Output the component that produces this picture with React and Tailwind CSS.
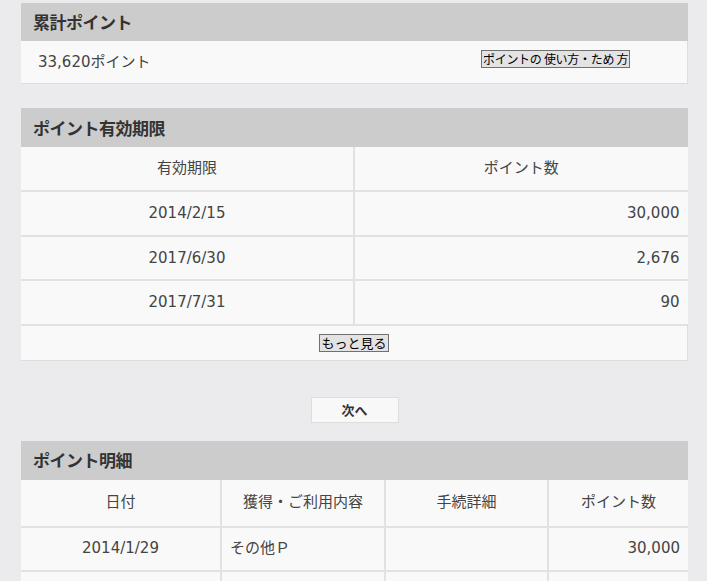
import React from "react";

const font = { fontFamily: '"DejaVu Sans", "Noto Sans CJK JP", sans-serif' };
const jp = { fontFamily: '"Noto Sans CJK JP", sans-serif' };

function Header({ children, h = "h-[39px]" }) {
  return (
    <div
      className={`${h} bg-[#cccccc] pl-[12px] flex items-center text-[17px] font-bold text-[#333333] tracking-[-0.5px]`}
      style={jp}
    >
      {children}
    </div>
  );
}

const cell = "border-[2px] border-[#e2e2e2] text-[15px] text-[#444444] font-normal";

export default function App() {
  return (
    <div className="min-h-[581px] w-[707px] bg-[#ebebed] pt-[3px] pl-[21px]" style={font}>
      {/* 累計ポイント */}
      <div className="w-[667px]">
        <Header h="h-[38px]">累計ポイント</Header>
        <div className="h-[43px] bg-[#f9f9f9] border-r border-b border-[#dddddd] flex items-center relative">
          <span className="pl-[17px] text-[15px] text-[#444444]">33,620ポイント</span>
          <button
            className="absolute left-[460px] top-[9px] h-[18px] px-[1px] border border-[#707070] bg-[#e3e3e3] text-[12px] leading-[16px] text-black tracking-[-0.3px]"
            style={jp}
          >
            ポイントの 使い方・ため 方
          </button>
        </div>
      </div>

      {/* ポイント有効期限 */}
      <div className="w-[667px] mt-[24px]">
        <Header>ポイント有効期限</Header>
        <table className="w-full border-collapse bg-[#f9f9f9] table-fixed">
          <colgroup>
            <col className="w-[333px]" />
            <col />
          </colgroup>
          <thead>
            <tr className="h-[44px]">
              <th className={`${cell} border-t-0 border-l-0 text-center`}>有効期限</th>
              <th className={`${cell} border-t-0 border-r-0 text-center`}>ポイント数</th>
            </tr>
          </thead>
          <tbody>
            <tr className="h-[45px]">
              <td className={`${cell} border-l-0 text-center`}>2014/2/15</td>
              <td className={`${cell} border-r-0 text-right pr-[8px]`}>30,000</td>
            </tr>
            <tr className="h-[44px]">
              <td className={`${cell} border-l-0 text-center`}>2017/6/30</td>
              <td className={`${cell} border-r-0 text-right pr-[8px]`}>2,676</td>
            </tr>
            <tr className="h-[45px]">
              <td className={`${cell} border-l-0 text-center`}>2017/7/31</td>
              <td className={`${cell} border-r-0 text-right pr-[8px]`}>90</td>
            </tr>
            <tr className="h-[35px]">
              <td
                colSpan={2}
                className="border-t-[2px] border-[#e2e2e2] border-b border-r border-b-[#dddddd] border-r-[#dddddd] text-center"
              >
                <button
                  className="h-[18px] px-[1px] border border-[#707070] bg-[#e3e3e3] text-[13px] leading-[16px] text-black align-middle"
                  style={jp}
                >
                  もっと見る
                </button>
              </td>
            </tr>
          </tbody>
        </table>
      </div>

      {/* 次へ */}
      <div className="w-[667px] flex justify-center mt-[36px]">
        <button
          className="w-[88px] h-[26px] bg-[#f8f8f8] border border-[#dddddd] text-[13px] font-bold text-[#333333]"
          style={jp}
        >
          次へ
        </button>
      </div>

      {/* ポイント明細 */}
      <div className="w-[667px] mt-[18px]">
        <Header>ポイント明細</Header>
        <table className="w-full border-collapse bg-[#f9f9f9] table-fixed">
          <colgroup>
            <col className="w-[200px]" />
            <col className="w-[164px]" />
            <col className="w-[163px]" />
            <col />
          </colgroup>
          <thead>
            <tr className="h-[47px]">
              <th className={`${cell} border-t-0 border-l-0 text-center`}>日付</th>
              <th className={`${cell} border-t-0 text-center`}>獲得・ご利用内容</th>
              <th className={`${cell} border-t-0 text-center`}>手続詳細</th>
              <th className={`${cell} border-t-0 border-r-0 text-center`}>ポイント数</th>
            </tr>
          </thead>
          <tbody>
            <tr className="h-[44px]">
              <td className={`${cell} border-l-0 text-center`}>2014/1/29</td>
              <td className={`${cell} text-left pl-[8px]`}>その他Ｐ</td>
              <td className={`${cell}`}></td>
              <td className={`${cell} border-r-0 text-right pr-[8px]`}>30,000</td>
            </tr>
            <tr className="h-[45px]">
              <td className={`${cell} border-l-0`}></td>
              <td className={`${cell}`}></td>
              <td className={`${cell}`}></td>
              <td className={`${cell} border-r-0`}></td>
            </tr>
          </tbody>
        </table>
      </div>
    </div>
  );
}
